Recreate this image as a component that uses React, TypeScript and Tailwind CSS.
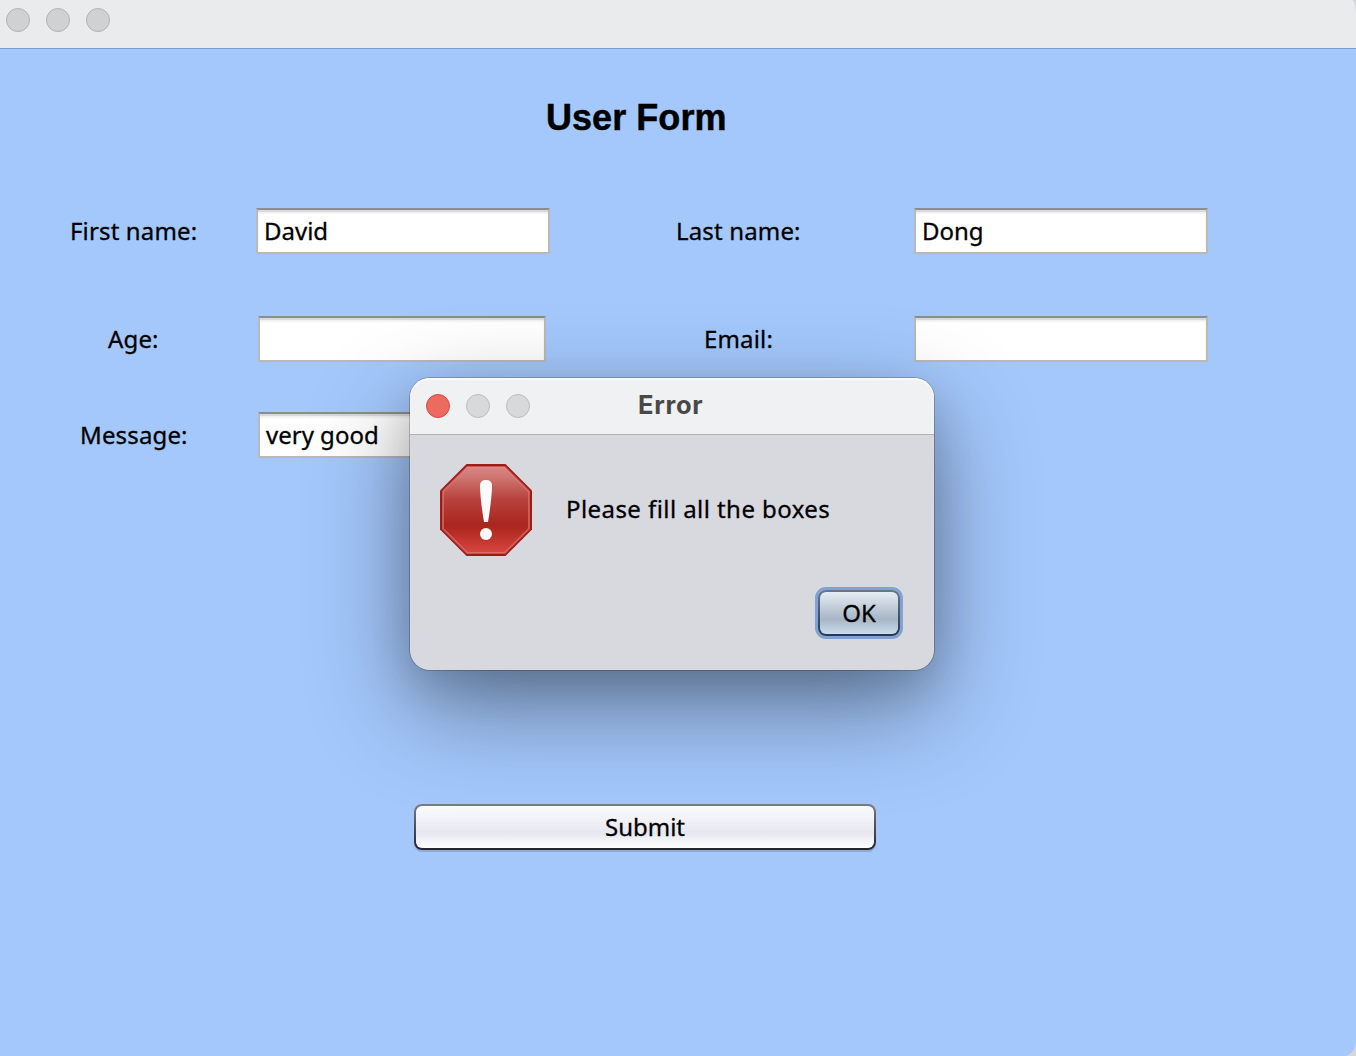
import React from "react";

function Light({ className }: { className: string }) {
  return <span className={`block h-6 w-6 rounded-full border ${className}`} />;
}

function Field({ value, className }: { value?: string; className: string }) {
  return (
    <div
      className={`flex h-[46px] items-center whitespace-pre border-2 border-t-[#8c8d90] border-r-[#b8b9bb] border-b-[#b9b9b9] border-l-[#b8b9bb] bg-white pl-[6px] shadow-[inset_0_2px_1px_#d8d8d8,inset_0_4px_1px_#f4f4f4] ${className}`}
    >
      {value}
    </div>
  );
}

function Label({ children, className }: { children: string; className: string }) {
  return <label className={`block shrink-0 whitespace-nowrap tracking-[0.15px] ${className}`}>{children}</label>;
}

function ErrorIcon() {
  return (
    <svg width="92" height="92" viewBox="0 0 92 92" className="block shrink-0">
      <defs>
        <linearGradient id="stop" x1="0" y1="0" x2="0" y2="1">
          <stop offset="0" stopColor="#d98583" />
          <stop offset="0.12" stopColor="#cf7572" />
          <stop offset="0.38" stopColor="#b8413c" />
          <stop offset="0.68" stopColor="#aa251d" />
          <stop offset="1" stopColor="#d9453f" />
        </linearGradient>
      </defs>
      <path d="M26.500 0h39L92 26.500v39L65.500 92h-39L0 65.500v-39z" fill="#9f1d17" />
      <path d="M27.300 3h37.400L89 27.300v37.400L64.700 89H27.300L3 64.700V27.300z" fill="url(#stop)" stroke="#e58f8c" strokeOpacity="0.5" strokeWidth="2" />
      <path d="M40 21.500C40 17.800 42.500 16 46 16s6 1.800 6 5.500c0 9-2.200 26-4 36.500h-4c-1.800-10.500-4-27.500-4-36.500z" fill="#fbfbfb" />
      <circle cx="46" cy="70" r="6" fill="#fbfbfb" />
    </svg>
  );
}

function ErrorDialog() {
  return (
    <div
      role="dialog"
      className="absolute left-[410px] top-[378px] h-[292px] w-[524px] rounded-[20px] bg-[#d8d9df] shadow-[0_0_0_1px_rgba(0,0,0,0.2),0_36px_100px_rgba(0,0,0,0.42),0_16px_40px_rgba(0,0,0,0.13)]"
    >
      <div className="flex h-[57px] items-center gap-4 rounded-t-[20px] border-b border-[#b0b2b8] bg-[#f0f1f3] pl-4 shadow-[inset_0_2px_0_#f9fafb]">
        <Light className="border-[#d9493e] bg-[#ed6a5e]" />
        <Light className="border-[#bcbdbe] bg-[#d8d9da]" />
        <Light className="border-[#bcbdbe] bg-[#d8d9da]" />
        <span className="-mt-[2px] ml-[92px] font-['Inter'] text-[25.5px] font-bold tracking-[0.7px] text-[#484848] [-webkit-text-stroke:0px]">Error</span>
      </div>
      <div className="flex items-center gap-[34px] pl-[30px] pt-[29px]">
        <ErrorIcon />
        <p className="-mt-[2px] whitespace-nowrap tracking-[0.43px]">Please fill all the boxes</p>
      </div>
      <div className="flex justify-end pr-[34px] pt-[34px]">
        <button className="h-[46px] w-[82px] rounded-[8px] bg-linear-to-b from-[#66788d] to-[#26394f] p-[2px] shadow-[0_0_0_3px_#7ea3d4]">
          <span className="flex h-full items-center justify-center rounded-[6px] bg-linear-to-b from-[#e6edf4] via-[#a6b6c5] via-65% to-[#cbdcec]">OK</span>
        </button>
      </div>
    </div>
  );
}

export default function App() {
  return (
    <div className="h-[1056px] w-[1356px] overflow-hidden bg-[#d6d6d6]">
      <main className="relative h-full w-full overflow-hidden rounded-tr-[4px_14px] rounded-br-[12px_16px] bg-[#a4c8fc] font-['Noto_Sans',sans-serif] text-[24px] leading-[42px] text-black [-webkit-text-stroke:0.3px]">
        <header className="flex h-[49px] gap-4 border-b border-[#7b9fce] bg-[#e9ebec] pl-[6px] pt-2">
          <Light className="border-[#b1b2b3] bg-[#d0d1d2]" />
          <Light className="border-[#b1b2b3] bg-[#d0d1d2]" />
          <Light className="border-[#b1b2b3] bg-[#d0d1d2]" />
        </header>
        <h1 className="ml-[546px] mt-[48px] font-['Liberation_Sans'] text-[36px] font-bold leading-[42px] tracking-[0.05px] [-webkit-text-stroke:0.5px]">User Form</h1>
        <div className="mt-[69px] flex items-center">
          <Label className="ml-[70px] w-[186px]">First name:</Label>
          <Field value="David" className="w-[294px]" />
          <Label className="ml-[126px] w-[238px]">Last name:</Label>
          <Field value="Dong" className="w-[294px]" />
        </div>
        <div className="mt-[62px] flex items-center">
          <Label className="ml-[108px] w-[150px]">Age:</Label>
          <Field className="w-[288px]" />
          <Label className="ml-[158px] w-[210px]">Email:</Label>
          <Field className="w-[294px]" />
        </div>
        <div className="mt-[50px] flex items-center">
          <Label className="ml-[80px] w-[178px]">Message:</Label>
          <Field value="very good" className="w-[288px]" />
        </div>
        <button className="ml-[414px] mt-[346px] block h-[46px] w-[462px] rounded-[8px] bg-linear-to-b from-[#7c7e86] to-[#24262c] p-[2px] shadow-[0_2px_0_#8baad6]">
          <span className="flex h-full items-center justify-center rounded-[6px] bg-linear-to-b from-[#fcfcfe] via-[#e6e8f0] via-65% to-white">Submit</span>
        </button>
        <ErrorDialog />
      </main>
    </div>
  );
}
